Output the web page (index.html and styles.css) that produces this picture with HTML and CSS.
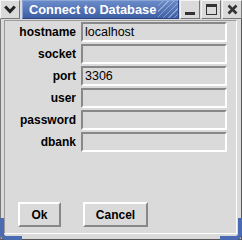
FILE: index.html
```html
<!DOCTYPE html>
<html lang="en">
<head>
    <meta charset="UTF-8">
    <title>Connect to Database</title>
    <link rel="stylesheet" href="styles.css">
</head>
<body>
    <div class="window">
        <div class="titlebar">
            <div class="tb-btn menu-btn">
                <svg width="12" height="9" viewBox="0 0 12 9"><path d="M1.2 1.5 L6 6.5 L10.8 1.5" fill="none" stroke="#222" stroke-width="3"/></svg>
            </div>
            <div class="title"><span>Connect to Database</span><div class="stripes"></div></div>
            <div class="tb-btn"><div class="min-icon"></div></div>
            <div class="tb-btn"><div class="max-icon"></div></div>
            <div class="tb-btn">
                <svg width="11" height="11" viewBox="0 0 11 11"><path d="M1.5 1.5 L9.5 9.5 M9.5 1.5 L1.5 9.5" stroke="#333" stroke-width="2.6"/></svg>
            </div>
        </div>

        <div class="content">
            <form class="fields">
                <label for="hostname">hostname</label>
                <input type="text" id="hostname" value="localhost">
                <label for="socket">socket</label>
                <input type="text" id="socket">
                <label for="port">port</label>
                <input type="text" id="port" value="3306">
                <label for="user">user</label>
                <input type="text" id="user">
                <label for="password">password</label>
                <input type="password" id="password">
                <label for="dbank">dbank</label>
                <input type="text" id="dbank">
            </form>

            <div class="buttons">
                <button class="btn btn-ok">Ok</button>
                <button class="btn btn-cancel">Cancel</button>
            </div>
        </div>

        <div class="corner corner-left"></div>
        <div class="corner corner-right"></div>
    </div>
</body>
</html>
```

FILE: styles.css
```css
body {
    margin: 0;
    padding: 0;
    background-color: #dadada;
    font-family: "Liberation Sans", Arial, sans-serif;
}

.window {
    position: relative;
    width: 242px;
    height: 240px;
    box-sizing: border-box;
    background-color: #dadada;
    border: 1px solid #555;
    border-top: none;
    border-left-color: #777;
    display: flex;
    flex-direction: column;
}

.titlebar {
    display: flex;
    height: 19px;
    margin: 0 -1px 0 -1px;
}

.tb-btn {
    width: 18px;
    height: 17px;
    background-color: #dadada;
    border: 1px solid;
    border-color: #f4f4f4 #777 #777 #f4f4f4;
    display: flex;
    align-items: center;
    justify-content: center;
    margin-left: 1px;
}

.menu-btn {
    margin-left: 0;
    margin-right: 2px;
}

.title {
    flex: 1;
    position: relative;
    background: linear-gradient(to bottom, #6a8bc8, #3f5fa6);
    border: 1px solid;
    border-color: #8aa4d6 #2a4580 #2a4580 #8aa4d6;
    color: #fff;
    font-weight: bold;
    font-size: 12.8px;
    line-height: 17px;
    padding-left: 6px;
    overflow: hidden;
    display: flex;
}

.title span {
    white-space: nowrap;
}

.stripes {
    flex: 1;
    margin-left: 2px;
    background: repeating-linear-gradient(135deg, transparent 0, transparent 3px, rgba(255,255,255,0.35) 3px, rgba(255,255,255,0.35) 4px);
}

.min-icon {
    width: 10px;
    height: 3px;
    background-color: #333;
    margin-top: 7px;
}

.max-icon {
    width: 9px;
    height: 7px;
    border: 1px solid #333;
    border-top-width: 3px;
}

.content {
    flex: 1;
    margin: 1px 4px 5px 3px;
    border: 1px solid;
    border-color: #9a9a9a #fff #fff #9a9a9a;
    display: flex;
    flex-direction: column;
}

.fields {
    display: grid;
    grid-template-columns: 71px 146px;
    grid-auto-rows: 20px;
    column-gap: 5px;
    row-gap: 2px;
    margin: 1px 0 0 0;
}

.fields label {
    font-weight: bold;
    font-size: 12px;
    color: #000;
    text-align: right;
    line-height: 20px;
}

.fields input {
    box-sizing: border-box;
    height: 20px;
    margin: 0;
    padding: 0 2px;
    background-color: #dadada;
    border: 2px solid;
    border-color: #888 #fff #fff #888;
    font-family: "Liberation Sans", Arial, sans-serif;
    font-size: 12.5px;
    color: #000;
    outline: none;
}

.buttons {
    margin-top: auto;
    margin-bottom: 6px;
    display: flex;
    gap: 22px;
    padding-left: 13px;
}

.btn {
    box-sizing: border-box;
    height: 25px;
    background-color: #dadada;
    border: 2px solid;
    border-color: #fff #888 #888 #fff;
    font-family: "Liberation Sans", Arial, sans-serif;
    font-weight: bold;
    font-size: 12px;
    color: #000;
    padding: 0;
}

.btn-ok {
    width: 43px;
}

.btn-cancel {
    width: 65px;
}

.corner {
    position: absolute;
    bottom: -1px;
    width: 18px;
    height: 18px;
    border: 4px solid #4a6ab2;
    border-top: none;
}

.corner-left {
    left: -1px;
    border-right: none;
    border-bottom-left-radius: 6px;
}

.corner-right {
    right: -1px;
    border-left: none;
    border-bottom-right-radius: 6px;
}
```
